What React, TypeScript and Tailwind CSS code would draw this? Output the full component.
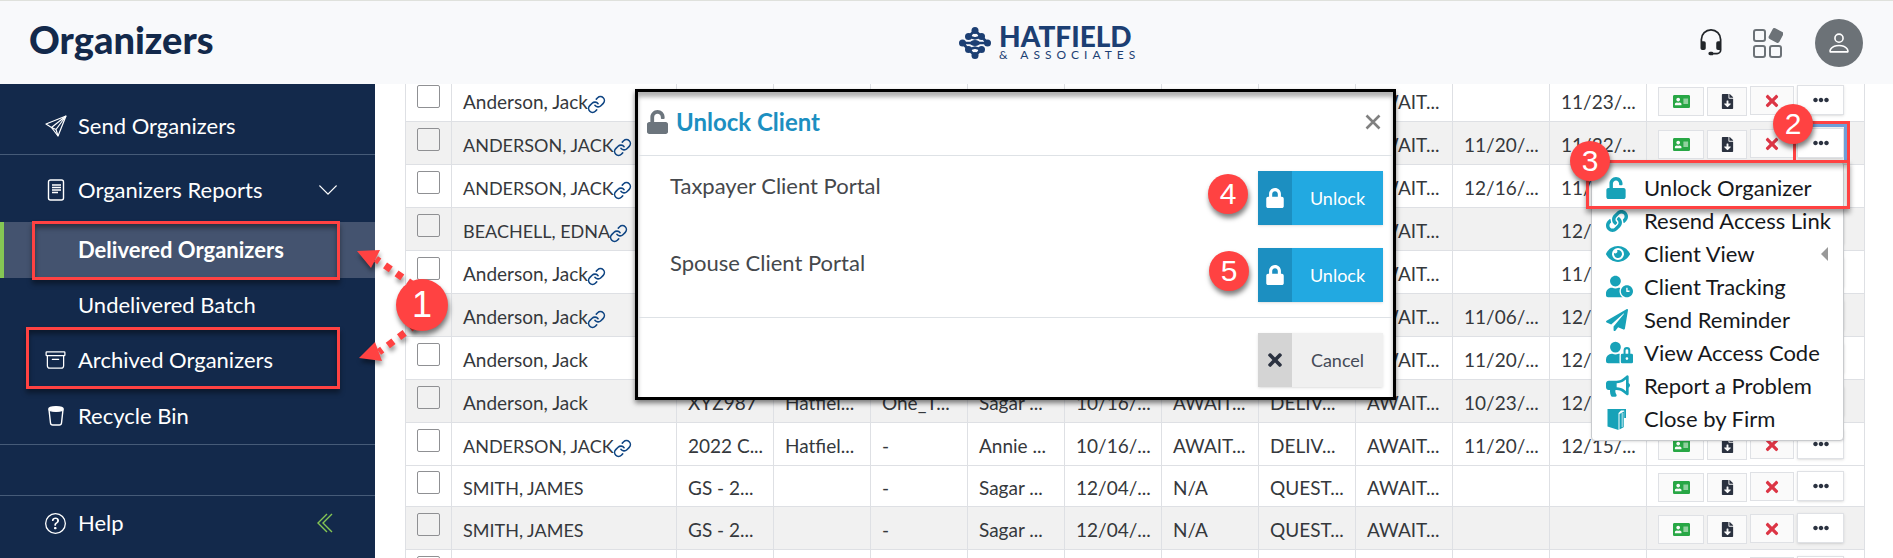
import type { ReactNode } from 'react'
import {
  BsArchive,
  BsChevronDown,
  BsHeadset,
  BsPerson,
  BsQuestionCircle,
} from 'react-icons/bs'
import {
  FaAddressCard,
  FaBullhorn,
  FaEllipsisH,
  FaEye,
  FaFileDownload,
  FaLink,
  FaLock,
  FaPaperPlane,
  FaTimes,
  FaUnlock,
  FaUserClock,
  FaUserLock,
} from 'react-icons/fa'
import { FiLink } from 'react-icons/fi'

type Row = {
  name: string
  linked?: boolean
  shaded?: boolean
  short?: boolean
  cells: string[]
}

const rows: Row[] = [
  { name: 'Anderson, Jack', linked: true, cells: ['', '', '', '', '', '', '', 'AWAIT...', '', '11/23/...'] },
  { name: 'ANDERSON, JACK', linked: true, shaded: true, cells: ['', '', '', '', '', '', '', 'AWAIT...', '11/20/...', '11/22/...'] },
  { name: 'ANDERSON, JACK', linked: true, cells: ['', '', '', '', '', '', '', 'AWAIT...', '12/16/...', '11/07/...'] },
  { name: 'BEACHELL, EDNA', linked: true, shaded: true, cells: ['', '', '', '', '', '', '', 'AWAIT...', '', '12/15/...'] },
  { name: 'Anderson, Jack', linked: true, cells: ['', '', '', '', '', '', '', 'AWAIT...', '', '11/22/...'] },
  { name: 'Anderson, Jack', linked: true, shaded: true, cells: ['', '', '', '', '', '', '', 'AWAIT...', '11/06/...', '12/15/...'] },
  { name: 'Anderson, Jack', cells: ['', '', '', '', '', '', '', 'AWAIT...', '11/20/...', '12/15/...'] },
  { name: 'Anderson, Jack', shaded: true, cells: ['XYZ987', 'Hatfiel...', 'One_T...', 'Sagar ...', '10/16/...', 'AWAIT...', 'DELIV...', 'AWAIT...', '10/23/...', '12/15/...'] },
  { name: 'ANDERSON, JACK', linked: true, cells: ['2022 C...', 'Hatfiel...', '-', 'Annie ...', '10/16/...', 'AWAIT...', 'DELIV...', 'AWAIT...', '11/20/...', '12/15/...'] },
  { name: 'SMITH, JAMES', short: true, cells: ['GS - 2...', '', '-', 'Sagar ...', '12/04/...', 'N/A', 'QUEST...', 'AWAIT...', '', ''] },
  { name: 'SMITH, JAMES', shaded: true, cells: ['GS - 2...', '', '-', 'Sagar ...', '12/04/...', 'N/A', 'QUEST...', 'AWAIT...', '', ''] },
  { name: '', cells: ['', '', '', '', '', '', '', '', '', ''] },
]

function SendIcon() {
  return (
    <svg viewBox="0 0 22 22" className="h-[22px] w-[22px]" fill="none" stroke="currentColor" strokeWidth="1.2" strokeLinejoin="round">
      <path d="M21 1 1 9l5.500 3.500L13 21z" />
      <path d="M21 1 6.500 12.500M21 1 11 14.500l2 6.500M6.500 12.500l4.500 2" />
    </svg>
  )
}

function ReportIcon() {
  return (
    <svg viewBox="0 0 22 22" className="h-[22px] w-[22px]" fill="none" stroke="currentColor" strokeWidth="1.400">
      <rect x="3.500" y="1" width="15" height="20" rx="2" />
      <path d="M7 6h9M7 8.500h9M7 11h9M7 13.500h6" />
    </svg>
  )
}

function BinIcon() {
  return (
    <svg viewBox="0 0 22 22" className="h-[22px] w-[22px]" fill="none" stroke="currentColor" strokeWidth="1.400">
      <path d="M4 4.500 5.500 18q.2 2 2.200 2h6.600q2 0 2.200-2L18 4.500" />
      <ellipse cx="11" cy="4" rx="7.200" ry="2.300" fill="currentColor" />
    </svg>
  )
}

function DoubleLeft() {
  return (
    <svg viewBox="0 0 16 20" className="h-5 w-4" fill="none" stroke="currentColor" strokeWidth="1.400">
      <path d="M10 1 1 10l9 9M15 1 6 10l9 9" />
    </svg>
  )
}

function AppsIcon() {
  return (
    <svg viewBox="0 0 30 30" className="h-[30px] w-[30px]" fill="none" stroke="currentColor" strokeWidth="2">
      <rect x="1" y="2" width="11" height="11" rx="2" />
      <rect x="1" y="18" width="11" height="11" rx="2" />
      <rect x="17" y="18" width="11" height="11" rx="2" />
      <rect x="17" y="1.500" width="12" height="12" rx="2" fill="currentColor" stroke="none" transform="rotate(28 23 7.500)" />
    </svg>
  )
}

function BookIcon() {
  return (
    <svg viewBox="0 0 20 22" className="h-[22px] w-5" fill="currentColor">
      <path d="M1.500 1H20v9h-1.800V2.500H15L12.500 5v17L1.500 18.500z" />
      <path d="M13.500 6 18 3.500V19l-4.500 2.500z" />
      <path d="M16.500 5.500V19" stroke="#fff" strokeWidth="2" strokeDasharray="1 1" />
    </svg>
  )
}

function Logo() {
  return (
    <div className="flex items-center gap-2 text-[#1c3f73]">
      <svg viewBox="0 0 32 32" className="h-8 w-8" fill="currentColor" stroke="currentColor" strokeWidth="2.600">
        <path d="M16 3.500 9.500 9.500M16 3.500l6.500 6M3.500 16H28M9.500 9.500 16 11.500l6.500-2M9.500 22.500l6.500-2 6.500 2M16 28.500l-6.500-6M16 28.500l6.500-6M3.500 16l6 6.500M28.500 16l-6-6.500" fill="none" />
        <g stroke="none">
          <circle cx="16" cy="3.500" r="3.500" />
          <circle cx="9.500" cy="9.500" r="3.500" />
          <circle cx="22.500" cy="9.500" r="3.500" />
          <circle cx="3.500" cy="16" r="3.500" />
          <ellipse cx="16" cy="16" rx="5" ry="3" />
          <circle cx="28.500" cy="16" r="3.500" />
          <circle cx="9.500" cy="22.500" r="3.500" />
          <circle cx="22.500" cy="22.500" r="3.500" />
          <circle cx="16" cy="28.500" r="3.500" />
        </g>
      </svg>
      <div className="flex flex-col pb-0.5">
        <span className="text-[28px] leading-[26px] font-black">HATFIELD</span>
        <span className="-mr-2 text-xs leading-3 tracking-[5px] whitespace-nowrap">&amp; ASSOCIATES</span>
      </div>
    </div>
  )
}

function Badge({ n, className, big }: { n: number; className: string; big?: boolean }) {
  return (
    <span
      className={
        "absolute z-30 flex items-center justify-center rounded-full bg-[#ff4242] font-['Liberation_Sans',sans-serif] text-white shadow-[1px_4px_5px_rgba(0,0,0,0.5)] " +
        (big ? 'h-[52px] w-[52px] text-4xl ' : 'h-10 w-10 text-3xl ') +
        className
      }
    >
      {n}
    </span>
  )
}

function NavItem({ icon, label, className = '', end }: { icon?: ReactNode; label: string; className?: string; end?: ReactNode }) {
  return (
    <a href="#" className={'flex items-center pr-9 pl-[45px] text-[22px] leading-7 ' + className}>
      <span className="flex w-[33px] shrink-0">{icon}</span>
      <span className="grow">{label}</span>
      {end}
    </a>
  )
}

function Sidebar() {
  return (
    <nav className="relative flex w-[375px] shrink-0 flex-col bg-[#13294b] text-white">
      <NavItem icon={<SendIcon />} label="Send Organizers" className="h-[71px] border-b border-[#465b78] pt-3.5" />
      <NavItem
        icon={<ReportIcon />}
        label="Organizers Reports"
        className="h-[67px] pt-0.5"
        end={<BsChevronDown className="h-[22px] w-[22px]" />}
      />
      <div className="border-l-4 border-[#85c654] bg-[#44536f]">
        <NavItem label="Delivered Organizers" className="-ml-1 h-14 font-bold" />
      </div>
      <NavItem label="Undelivered Batch" className="h-[55px] pb-0.5" />
      <NavItem icon={<BsArchive className="h-5 w-[21px]" />} label="Archived Organizers" className="h-14 pb-0.5" />
      <NavItem icon={<BinIcon />} label="Recycle Bin" className="h-14 border-b border-[#465b78] pb-0.5" />
      <div className="h-[50px]" />
      <NavItem
        icon={<BsQuestionCircle className="h-[21px] w-[21px]" />}
        label="Help"
        className="h-[63px] border-t border-[#465b78] pb-2"
        end={<span className="pr-1.5 text-[#85c654]"><DoubleLeft /></span>}
      />
      <div className="pointer-events-none absolute top-[137px] left-8 h-[59px] w-[308px] border-3 border-[#ff4242] shadow-[0_4px_5px_rgba(0,0,0,0.4),inset_0_4px_5px_rgba(0,0,0,0.4)]" />
      <div className="pointer-events-none absolute top-[243px] left-[26px] h-[62px] w-[314px] border-3 border-[#ff4242] shadow-[0_4px_5px_rgba(0,0,0,0.4),inset_0_4px_5px_rgba(0,0,0,0.4)]" />
    </nav>
  )
}

function RowActions() {
  return (
    <div className="flex items-start gap-[3px] pt-px text-[#2b3240]">
      <button aria-label="Client card" className="mt-0.5 flex h-[29px] w-[46px] items-center justify-center border border-[#dfe1e5] bg-[#fafafa] text-[#28a745]">
        <FaAddressCard className="h-[17px] w-[17px]" />
      </button>
      <button aria-label="Download" className="mt-0.5 flex h-[29px] w-10 items-center justify-center border border-[#dfe1e5] bg-[#fafafa]">
        <FaFileDownload className="h-[15px] w-[15px]" />
      </button>
      <button aria-label="Delete" className="mt-px flex h-[29px] w-11 items-center justify-center border border-[#dfe1e5] bg-[#fafafa] text-[#dc3545]">
        <FaTimes className="h-[18px] w-[18px]" />
      </button>
      <button aria-label="More" className="flex h-[30px] w-[47px] items-center justify-center border border-[#dfe1e5] bg-white shadow-sm">
        <FaEllipsisH className="h-4 w-4" />
      </button>
    </div>
  )
}

function OrganizersTable() {
  return (
    <table className="-mt-[6px] w-[1460px] table-fixed border-collapse text-[19px] leading-6 text-[#35383c]">
      <colgroup>
        <col className="w-[46px]" />
        <col className="w-[225px]" />
        {rows[0].cells.map((_, i) => (
          <col key={i} className="w-[97px]" />
        ))}
        <col />
      </colgroup>
      <tbody>
        {rows.map((row, i) => (
          <tr key={i} className={(row.shaded ? 'bg-[#f1f1f1] ' : '') + (row.short ? 'h-[41px]' : 'h-[43px]')}>
            <td className="border border-[#dee0e4] p-0 pb-[7px]">
              <input
                type="checkbox"
                aria-label={'Select ' + row.name}
                className="mx-auto block h-[23px] w-[23px] appearance-none rounded-[2px] border border-[#8f9093]"
              />
            </td>
            <td className="border border-[#dee0e4] p-0 pt-1 pl-[11px]">
              <div className={'flex items-center whitespace-nowrap ' + (row.name === row.name.toUpperCase() ? 'text-lg leading-6' : '')}>
                {row.name}
                {row.linked && <FiLink className="-ml-px mt-1 h-[19px] w-[19px] text-[#0f4583]" />}
              </div>
            </td>
            {row.cells.map((c, j) => (
              <td key={j} className="overflow-hidden border border-[#dee0e4] p-0 pt-1 pl-[11px] whitespace-nowrap">
                {c}
              </td>
            ))}
            <td className="border border-[#dee0e4] p-0 pl-[11px]">
              <RowActions />
            </td>
          </tr>
        ))}
      </tbody>
    </table>
  )
}

function ModalButton({ icon, label, muted }: { icon: ReactNode; label: string; muted?: boolean }) {
  return (
    <button
      className={
        'flex h-[54px] w-[125px] shrink-0 text-lg shadow-sm ' +
        (muted ? 'bg-[#f0f0f0] text-[#454b58]' : 'bg-[#22a9e1] text-white')
      }
    >
      <span className={'flex h-full w-[34px] items-center justify-center ' + (muted ? 'bg-[#d4d4d4] text-[#2b3240]' : 'bg-[#1c8fc1]')}>
        {icon}
      </span>
      <span className="grow self-center text-center">{label}</span>
    </button>
  )
}

function UnlockModal() {
  return (
    <div
      role="dialog"
      aria-label="Unlock Client"
      className="absolute top-[89px] left-[635px] z-10 w-[761px] border-3 border-black bg-white text-[#45484c] shadow-[0_3px_5px_rgba(0,0,0,0.5),inset_0_5px_4px_rgba(0,0,0,0.3)]"
    >
      <div className="flex h-16 items-center border-b border-[#dee2e6] pr-3 pb-[3px] pl-[9px]">
        <FaUnlock className="h-6 w-[21px] text-[#6c757d]" />
        <h2 className="grow pl-2 text-2xl font-bold text-[#1c8fc1]">Unlock Client</h2>
        <button aria-label="Close" className="text-[#808080]">
          <svg viewBox="0 0 16 16" className="h-4 w-4" stroke="currentColor" strokeWidth="2.600">
            <path d="m1.500 1.500 13 13m0-13-13 13" />
          </svg>
        </button>
      </div>
      <div className="flex flex-col gap-[23px] border-b border-[#dee2e6] py-[15px] pr-[10px] pl-8 text-[22px] leading-[30px]">
        <div className="flex justify-between">
          <span>Taxpayer Client Portal</span>
          <ModalButton icon={<FaLock className="h-5 w-[18px]" />} label="Unlock" />
        </div>
        <div className="flex justify-between">
          <span>Spouse Client Portal</span>
          <ModalButton icon={<FaLock className="h-5 w-[18px]" />} label="Unlock" />
        </div>
      </div>
      <div className="flex justify-end pt-[15px] pr-[10px] pb-[10px]">
        <ModalButton muted icon={<FaTimes className="h-5 w-5" />} label="Cancel" />
      </div>
    </div>
  )
}

const menu = [
  { icon: <FaUnlock className="h-[22px] w-5" />, label: 'Unlock Organizer' },
  { icon: <FaLink className="h-[22px] w-[22px]" />, label: 'Resend Access Link' },
  { icon: <FaEye className="h-6 w-6" />, label: 'Client View', sub: true },
  { icon: <FaUserClock className="h-[27px] w-[27px]" />, label: 'Client Tracking' },
  { icon: <FaPaperPlane className="h-[22px] w-[22px]" />, label: 'Send Reminder' },
  { icon: <FaUserLock className="h-[27px] w-[27px]" />, label: 'View Access Code' },
  { icon: <FaBullhorn className="h-6 w-6" />, label: 'Report a Problem' },
  { icon: <BookIcon />, label: 'Close by Firm' },
]

function ActionMenu() {
  return (
    <ul className="absolute top-[161px] left-[1591px] z-10 w-[253px] rounded-sm border border-[#c9cbce] bg-white pt-[9px] pb-[5px] text-[22px] leading-[33px] text-[#16181b] shadow-sm">
      {menu.map((m) => (
        <li key={m.label}>
          <button className="flex h-[33px] w-full items-center pl-[14px] text-left whitespace-nowrap">
            <span className="w-[38px] shrink-0 text-[#17a2b8]">{m.icon}</span>
            {m.label}
            {m.sub && <span className="mr-[15px] ml-auto border-y-[7px] border-r-[7px] border-y-transparent border-r-[#999]" />}
          </button>
        </li>
      ))}
    </ul>
  )
}

function Arrows() {
  return (
    <svg viewBox="0 0 80 130" className="pointer-events-none absolute top-[240px] left-[350px] z-20 h-[130px] w-20 drop-shadow-[1px_4px_2px_rgba(0,0,0,0.4)]">
      <path d="M7 11 30 10 21 28zM9 118 25 102l7 19z" fill="#ff4242" />
      <path d="M26 19 72 51M29 112 72 80" fill="none" stroke="#ff4242" strokeWidth="7" strokeDasharray="7 7" strokeDashoffset="3" />
    </svg>
  )
}

export default function App() {
  return (
    <div className="relative flex h-screen flex-col overflow-hidden bg-white font-[Lato,sans-serif]">
      <header className="relative z-[5] flex h-[84px] shrink-0 items-center border-t border-[#dfe1dc] bg-[#f8f9fb] pr-[30px] pl-[29px]">
        <h1 className="flex-[14] pb-2 text-[38px] leading-[46px] font-black text-[#13294b]">Organizers</h1>
        <Logo />
        <div className="flex flex-[11] items-center justify-end text-[#6c7277]">
          <button aria-label="Support" className="mr-7 text-[#212529]"><BsHeadset className="h-7 w-7" /></button>
          <button aria-label="Apps" className="mr-8"><AppsIcon /></button>
          <button aria-label="Account" className="flex h-12 w-12 items-center justify-center rounded-full bg-[#6c7277] text-white">
            <BsPerson className="h-[26px] w-[26px]" />
          </button>
        </div>
      </header>
      <div className="flex min-h-0 grow">
        <Sidebar />
        <main className="min-w-0 grow overflow-hidden pl-[30px]">
          <OrganizersTable />
        </main>
      </div>

      <UnlockModal />
      <ActionMenu />
      <div className="pointer-events-none absolute top-[121px] left-[1793px] z-20 h-[42px] w-[57px] border-3 border-[#ff4242] shadow-[inset_-3px_3px_0_#6f9fd8]" />
      <div className="pointer-events-none absolute top-[160px] left-[1586px] z-20 h-[49px] w-[264px] border-3 border-[#ff4242] shadow-[0_4px_5px_rgba(0,0,0,0.4),inset_0_4px_5px_rgba(0,0,0,0.3)]" />
      <Arrows />
      <Badge n={1} big className="top-[279px] left-[396px]" />
      <Badge n={2} className="top-[104px] left-[1773px]" />
      <Badge n={3} className="top-[141px] left-[1570px]" />
      <Badge n={4} className="top-[174px] left-[1208px]" />
      <Badge n={5} className="top-[251px] left-[1209px]" />
    </div>
  )
}
